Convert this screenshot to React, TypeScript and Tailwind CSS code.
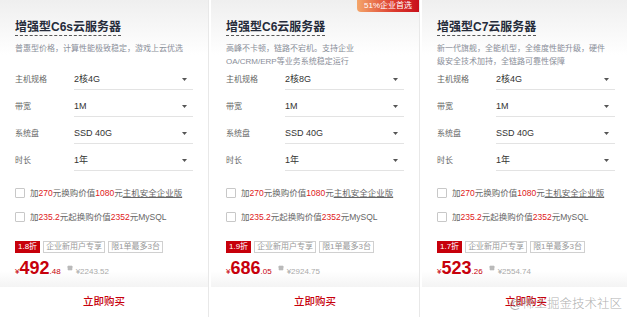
import React from 'react';

interface Plan {
  title: string;
  desc: string[];
  spec: string;
  discount: string;
  price: string;
  cents: string;
  orig: string;
  badge?: string;
}

const plans: Plan[] = [
  {
    title: '增强型C6s云服务器',
    desc: ['普惠型价格，计算性能极致稳定，游戏上云优选'],
    spec: '2核4G',
    discount: '1.8折',
    price: '492',
    cents: '.48',
    orig: '¥2243.52',
  },
  {
    title: '增强型C6云服务器',
    desc: ['高峰不卡顿，链路不宕机。支持企业', 'OA/CRM/ERP等业务系统稳定运行'],
    spec: '2核8G',
    discount: '1.9折',
    price: '686',
    cents: '.05',
    orig: '¥2924.75',
    badge: '51%企业首选',
  },
  {
    title: '增强型C7云服务器',
    desc: ['新一代旗舰，全能机型，全维度性能升级，硬件', '级安全技术加持，全链路可靠性保障'],
    spec: '2核4G',
    discount: '1.7折',
    price: '523',
    cents: '.26',
    orig: '¥2554.74',
  },
];

function Arrow() {
  return (
    <svg width="5" height="3" viewBox="0 0 5 3" className="mr-[6px]">
      <path d="M0 0h5L2.5 3z" fill="#555" />
    </svg>
  );
}

function SelectRow({ label, value }: { label: string; value: string }) {
  return (
    <div className="flex h-[27px] items-end">
      <span className="w-[59px] pb-[5px] text-[8px] leading-[10px] text-[#666]">{label}</span>
      <div className="flex h-[20px] w-[119px] items-center justify-between border-b border-[#e3e3e3]">
        <span className="text-[9px] text-[#333]">{value}</span>
        <Arrow />
      </div>
    </div>
  );
}

function CheckRow({ children }: { children: React.ReactNode }) {
  return (
    <label className="flex h-[16px] items-center gap-[5px] text-[8.5px] text-[#666]">
      <span className="h-[10px] w-[10px] rounded-[1px] border border-[#c8c8c8] bg-white" />
      <span className="whitespace-nowrap">{children}</span>
    </label>
  );
}

function PlanCard({ plan }: { plan: Plan }) {
  return (
    <div className="relative flex w-[209px] flex-col border-r border-[#e8e8e8] bg-[linear-gradient(180deg,#efefef_0px,#ffffff_55px)]">
      {plan.badge && (
        <div className="absolute right-0 top-0 flex h-[12px] w-[62px] items-center justify-center rounded-bl-[4px] bg-[linear-gradient(90deg,#f4a66a,#dc3a2e_60%,#c8101a)] text-[8px] leading-none text-white">
          {plan.badge}
        </div>
      )}

      {/* header */}
      <div className="h-[63px] px-[15px] pt-[14px]">
        <h3 className="inline-block border-b border-dashed border-[#555] text-[12px] font-bold leading-[15px] text-[#252b3a]">
          {plan.title}
        </h3>
        <div className="mt-[4px] text-[8px] leading-[13px] text-[#8a8e99]">
          {plan.desc.map((d) => (
            <div key={d} className="whitespace-nowrap">{d}</div>
          ))}
        </div>
      </div>

      {/* selects */}
      <div className="px-[15px]">
        <SelectRow label="主机规格" value={plan.spec} />
        <SelectRow label="带宽" value="1M" />
        <SelectRow label="系统盘" value="SSD 40G" />
        <SelectRow label="时长" value="1年" />
      </div>

      {/* add-ons */}
      <div className="mt-[14px] flex flex-col gap-[8px] px-[15px]">
        <CheckRow>
          加<span className="text-[#e02020]">270</span>元换购价值<span className="text-[#e02020]">1080</span>元
          <span className="underline">主机安全企业版</span>
        </CheckRow>
        <CheckRow>
          加<span className="text-[#e02020]">235.2</span>元起换购价值<span className="text-[#e02020]">2352</span>元MySQL
        </CheckRow>
      </div>

      {/* price */}
      <div className="mt-[16px] bg-[linear-gradient(180deg,#ffffff_0px,#ffffff_30px,#f3f3f3_47px)] px-[15px] pb-[9px]">
        <div className="flex gap-[3px] text-[8px] leading-[12px]">
          <span className="bg-[#c7000b] px-[3px] text-white">{plan.discount}</span>
          <span className="border border-[#d0d0d0] px-[2px] leading-[10px] text-[#999]">企业新用户专享</span>
          <span className="border border-[#d0d0d0] px-[2px] leading-[10px] text-[#999]">限1单最多3台</span>
        </div>
        <div className="mt-[5px] flex items-baseline text-[#c7000b]">
          <span className="text-[8px]">¥</span>
          <span className="text-[18px] font-bold leading-[20px]">{plan.price}</span>
          <span className="text-[8px]">{plan.cents}</span>
          <svg width="6" height="6" viewBox="0 0 6 6" className="ml-[6px] mr-[3px] self-center">
            <path d="M1 1h4v4H1z M0 2h6" fill="#bbb" stroke="#bbb" strokeWidth="0.6" />
          </svg>
          <span className="text-[8px] text-[#aaa]">{plan.orig}</span>
        </div>
      </div>

      {/* buy */}
      <div className="flex h-[29px] items-center justify-center bg-white text-[10.5px] font-medium text-[#c7000b]">
        立即购买
      </div>
    </div>
  );
}

export default function App() {
  return (
    <div className="relative flex h-[317px] w-[627px] gap-[2px] overflow-hidden bg-white font-['Liberation_Sans','Noto_Sans_CJK_SC',sans-serif]">
      {plans.map((p) => (
        <PlanCard key={p.title} plan={p} />
      ))}
      <div className="pointer-events-none absolute bottom-[7px] right-[5px] text-[12.5px] leading-none text-[#9a9a9a]/80 font-light">
        @稀土掘金技术社区
      </div>
    </div>
  );
}
